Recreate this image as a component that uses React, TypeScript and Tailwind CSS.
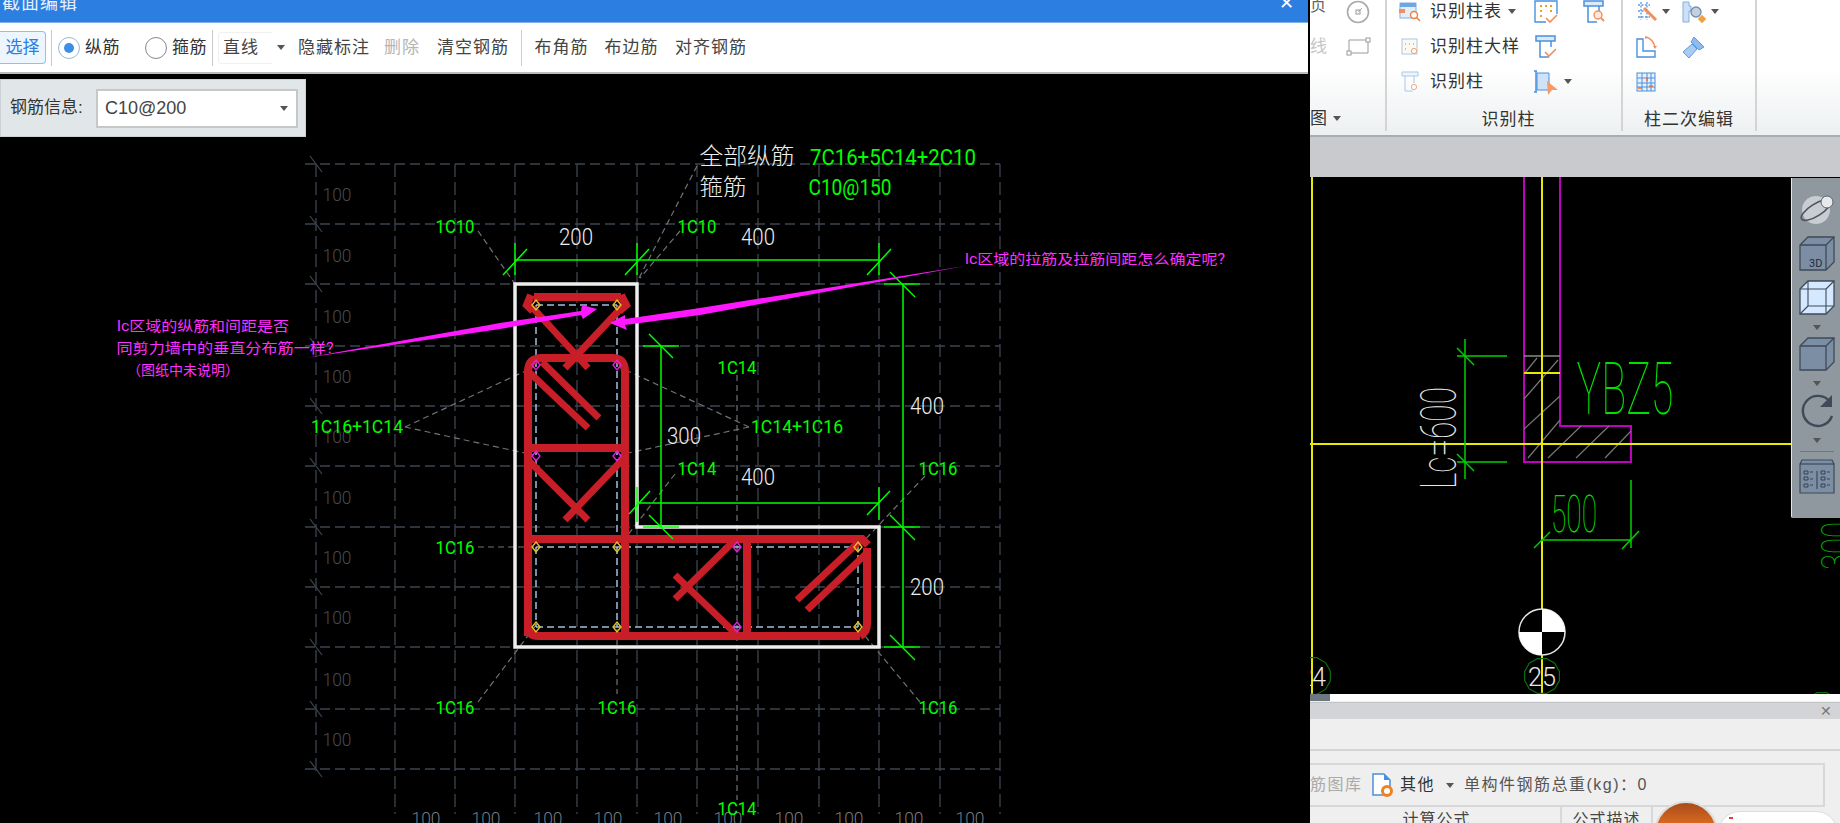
import React from 'react';

const cadFont = "Roboto,'Noto Sans CJK SC',sans-serif";
const H_LINES = [164, 224, 284, 346, 406, 466, 527, 587, 647, 709, 769];
const V_LINES = [316, 395, 455, 515, 577, 637, 697, 758, 819, 879, 940, 1000];
const LEFT_100 = [194, 255, 316, 376, 436, 497, 557, 617, 679, 739];
const BOTTOM_100 = [426, 486, 548, 608, 668, 728, 789, 849, 909, 970];

// cad label, squeezed to the measured width
const Cad = ({ x, y, w, size = 19, weight = 300, color = '#00ff00', children, rotate }: { x: number; y: number; w: number; size?: number; weight?: number; color?: string; children: React.ReactNode; rotate?: number }) => (
  <text
    x={x}
    y={y}
    textAnchor="middle"
    dominantBaseline="central"
    textLength={w}
    lengthAdjust="spacingAndGlyphs"
    fontSize={size}
    fontWeight={weight}
    fill={color}
    fontFamily={cadFont}
    transform={rotate ? `rotate(${rotate} ${x} ${y})` : undefined}
  >
    {children}
  </text>
);

const Seg = ({ p, color = '#00ff00', w = 1.5, dash }: { p: number[]; color?: string; w?: number; dash?: string }) => (
  <polyline points={p.join(',')} fill="none" stroke={color} strokeWidth={w} strokeDasharray={dash} />
);

const Marker = ({ x, y, color }: { x: number; y: number; color: string }) => (
  <polygon points={`${x},${y - 5} ${x + 4},${y} ${x},${y + 5} ${x - 4},${y}`} fill="none" stroke={color} strokeWidth={1.4} />
);

const Gon = ({ cx, cy, r }: { cx: number; cy: number; r: number }) => {
  const pts = Array.from({ length: 12 }, (_, i) => {
    const a = (i * Math.PI) / 6 + Math.PI / 12;
    return `${cx + r * Math.cos(a)},${cy + r * Math.sin(a)}`;
  }).join(' ');
  return <polygon points={pts} fill="none" stroke="#0a6d0a" strokeWidth={1.2} />;
};

const SectionDrawing = () => {
  const red = '#c81e28';
  const grey = '#6f7276';
  const blue = '#9fc0dc';
  return (
    <svg className="absolute inset-0" width={1308} height={749} viewBox="0 74 1308 749">
      {/* axis grid */}
      {H_LINES.map((y) => (
        <g key={y}>
          <Seg p={[305, y, 1000, y]} color="#3d444f" w={1.3} dash="10 5" />
          <Seg p={[310, y - 8, 322, y + 8]} color="#3d444f" w={1.2} />
        </g>
      ))}
      {V_LINES.map((x) => (
        <Seg key={x} p={[x, 164, x, x === 316 ? 774 : 814]} color="#3d444f" w={1.3} dash="13 5" />
      ))}
      {LEFT_100.map((y) => (
        <Cad key={y} x={337} y={y} w={29} color="#474b53">100</Cad>
      ))}
      {BOTTOM_100.map((x) => (
        <Cad key={x} x={x} y={818} w={29} color="#777b82">100</Cad>
      ))}

      {/* leaders */}
      <Seg p={[478, 231, 515, 284]} color={grey} w={1.2} dash="6 4" />
      <Seg p={[697, 166, 637, 282]} color={grey} w={1.2} dash="6 4" />
      <Seg p={[680, 231, 640, 278]} color={grey} w={1.2} dash="6 4" />
      <Seg p={[405, 427, 534, 367]} color={grey} w={1.2} dash="6 4" />
      <Seg p={[405, 427, 534, 455]} color={grey} w={1.2} dash="6 4" />
      <Seg p={[749, 427, 619, 367]} color={grey} w={1.2} dash="6 4" />
      <Seg p={[749, 427, 619, 455]} color={grey} w={1.2} dash="6 4" />
      <Seg p={[737, 375, 737, 800]} color={grey} w={1.2} dash="6 4" />
      <Seg p={[675, 474, 620, 545]} color={grey} w={1.2} dash="6 4" />
      <Seg p={[925, 476, 860, 545]} color={grey} w={1.2} dash="6 4" />
      <Seg p={[478, 547, 534, 547]} color={grey} w={1.2} dash="6 4" />
      <Seg p={[478, 702, 536, 625]} color={grey} w={1.2} dash="6 4" />
      <Seg p={[617, 629, 617, 694]} color={grey} w={1.2} dash="6 4" />
      <Seg p={[920, 702, 860, 630]} color={grey} w={1.2} dash="6 4" />

      {/* concrete outline */}
      <polygon points="515,284 637,284 637,527 879,527 879,647 515,647" fill="none" stroke="#eeeeee" strokeWidth={3.5} />

      {/* inner dashed */}
      <g fill="none" stroke={blue} strokeWidth={1.5} strokeDasharray="7 4">
        <path d="M536 305H617" />
        <path d="M536 305V627" />
        <path d="M617 305V627" />
        <path d="M536 547H858V627" />
        <path d="M536 627H858" />
      </g>

      {/* stirrups */}
      <g fill="none" stroke={red} strokeWidth={8}>
        <path d="M534 297H621M531 295L527 305L533 311M621 295L626 305L619 311" />
        <path d="M528 636V372Q528 358 542 358H612Q625 358 625 372V636" />
        <path d="M528 448H625" />
        <path d="M528 539H862L868 545" />
        <path d="M528 625Q528 636 538 636H860" />
        <path d="M747 541V636" />
        <path d="M867 548V624Q867 632 860 636" />
      </g>
      <g fill="none" stroke={red} strokeWidth={7}>
        <path d="M533 308L588 368M623 306L565 368" />
        <path d="M542 362L599 418M530 373L588 428" />
        <path d="M528 460L588 520M625 457L565 520" />
        <path d="M737 538L675 599M737 635L675 575" />
        <path d="M863 538L797 600M868 552L807 610" />
      </g>

      {[[536, 305], [617, 305], [536, 547], [617, 547], [536, 627], [617, 627], [858, 547], [858, 627]].map(([x, y]) => (
        <Marker key={`${x}-${y}`} x={x} y={y} color="#e8c020" />
      ))}
      {[[536, 365], [617, 365], [536, 456], [617, 456], [737, 547], [737, 627]].map(([x, y]) => (
        <Marker key={`${x}-${y}`} x={x} y={y} color="#e020e0" />
      ))}

      {/* dimensions */}
      <Seg p={[515, 260, 879, 260]} />
      {[515, 637, 879].map((x) => (
        <g key={x}>
          <Seg p={[x, 243, x, 275]} />
          <Seg p={[x - 12, 275, x + 12, 249]} />
        </g>
      ))}
      <Seg p={[903, 284, 903, 647]} />
      {[284, 527, 647].map((y) => (
        <g key={y}>
          <Seg p={[884, y, 920, y]} />
          <Seg p={[890, y - 12, 915, y + 13]} />
        </g>
      ))}
      <Seg p={[661, 346, 661, 527]} />
      {[346, 527].map((y) => (
        <g key={y}>
          <Seg p={[643, y, 679, y]} />
          <Seg p={[649, y - 12, 673, y + 12]} />
        </g>
      ))}
      <Seg p={[637, 503, 879, 503]} />
      <Seg p={[637, 487, 637, 522]} />
      <Seg p={[629, 514, 650, 491]} />
      <Seg p={[879, 487, 879, 520]} />
      <Seg p={[867, 515, 890, 491]} />

      {/* labels */}
      <Cad x={747} y={156} w={95} size={23} color="#eeeeee">全部纵筋</Cad>
      <Cad x={723} y={187} w={47} size={23} color="#eeeeee">箍筋</Cad>
      <Cad x={893} y={157} w={166} size={22} weight={400}>7C16+5C14+2C10</Cad>
      <Cad x={850} y={187} w={83} size={22} weight={400}>C10@150</Cad>
      <Cad x={455} y={226} w={39} weight={400}>1C10</Cad>
      <Cad x={697} y={226} w={39} weight={400}>1C10</Cad>
      <Cad x={576} y={237} w={34} size={23} color="#eeeeee">200</Cad>
      <Cad x={758} y={237} w={34} size={23} color="#eeeeee">400</Cad>
      <Cad x={737} y={367} w={39} weight={400}>1C14</Cad>
      <Cad x={357} y={426} w={92} weight={400}>1C16+1C14</Cad>
      <Cad x={797} y={426} w={92} weight={400}>1C14+1C16</Cad>
      <Cad x={684} y={436} w={34} size={23} color="#eeeeee">300</Cad>
      <Cad x={927} y={406} w={34} size={23} color="#eeeeee">400</Cad>
      <Cad x={697} y={468} w={39} weight={400}>1C14</Cad>
      <Cad x={758} y={477} w={34} size={23} color="#eeeeee">400</Cad>
      <Cad x={938} y={468} w={39} weight={400}>1C16</Cad>
      <Cad x={455} y={547} w={39} weight={400}>1C16</Cad>
      <Cad x={927} y={587} w={34} size={23} color="#eeeeee">200</Cad>
      <Cad x={455} y={707} w={39} weight={400}>1C16</Cad>
      <Cad x={617} y={707} w={39} weight={400}>1C16</Cad>
      <Cad x={938} y={707} w={39} weight={400}>1C16</Cad>
      <Cad x={737} y={808} w={39} weight={400}>1C14</Cad>

      {/* markup */}
      <polygon points="305,358 500,323 581,311 582,305 597,309 583,319 581,315 500,329" fill="#ff18ff" />
      <polygon points="965,266 700,308 625,319 625,315 610,323 627,330 625,325 700,315" fill="#ff18ff" />
      <Cad x={1095} y={259} w={260} size={14} weight={400} color="#ff30ff">lc区域的拉筋及拉筋间距怎么确定呢?</Cad>
      <Cad x={203} y={326} w={172} size={14} weight={400} color="#ff30ff">lc区域的纵筋和间距是否</Cad>
      <Cad x={225} y={348} w={217} size={14} weight={400} color="#ff30ff">同剪力墙中的垂直分布筋一样?</Cad>
      <Cad x={183} y={370} w={112} size={14} weight={400} color="#ff30ff">（图纸中未说明）</Cad>
    </svg>
  );
};

const FloorPlan = () => {
  const yellow = '#e8e800';
  const green = '#00a800';
  const bright = '#00d000';
  return (
    <svg className="absolute inset-0" width={530} height={517} viewBox="1310 177 530 517">
      <Seg p={[1524, 177, 1524, 462, 1631, 462, 1631, 426, 1560, 426, 1560, 177]} color="#c000c0" w={2} />
      <Seg p={[1524, 356, 1560, 356]} color="#8a8a8a" w={1.6} />
      <g stroke="#777" strokeWidth={1.2}>
        <path d="M1524 374L1537 358M1524 399L1558 360M1524 429L1560 396M1528 458L1560 420M1548 458L1581 426M1576 458L1609 426M1605 458L1631 431" />
      </g>
      <Seg p={[1312, 177, 1312, 694]} color={yellow} w={2} />
      <Seg p={[1542, 177, 1542, 694]} color={yellow} w={2} />
      <Seg p={[1310, 444, 1791, 444]} color={yellow} w={2} />
      <Seg p={[1524, 373, 1560, 373]} color={yellow} w={2} />

      <Seg p={[1465, 339, 1465, 479]} color={bright} />
      <Seg p={[1457, 356, 1507, 356]} color={bright} />
      <Seg p={[1457, 462, 1507, 462]} color={bright} />
      <Seg p={[1457, 348, 1474, 365]} color={bright} />
      <Seg p={[1457, 454, 1474, 471]} color={bright} />
      <Cad x={1439} y={438} w={102} size={50} weight={100} color="#e8e8e8" rotate={-90}>Lc=600</Cad>
      <Cad x={1625} y={389} w={97} size={72} weight={100} color="#00e000">YBZ5</Cad>
      <Cad x={1574} y={514} w={46} size={52} weight={100} color="#00e000">500</Cad>
      <Seg p={[1542, 540, 1631, 540]} color={bright} />
      <Seg p={[1631, 480, 1631, 548]} color={bright} />
      <Seg p={[1534, 548, 1550, 532]} color={bright} />
      <Seg p={[1622, 549, 1639, 531]} color={bright} />
      <Cad x={1836} y={546} w={48} size={42} weight={100} color={green} rotate={-90}>300</Cad>

      {/* section mark */}
      <circle cx={1542} cy={632} r={23} fill="#000" stroke="#e8e8e8" strokeWidth={1.5} />
      <path d="M1542 609A23 23 0 0 1 1565 632H1542Z" fill="#fff" />
      <path d="M1542 632V655A23 23 0 0 1 1519 632Z" fill="#fff" />

      <Gon cx={1542} cy={676} r={18} />
      <Gon cx={1312} cy={676} r={19} />
      <Gon cx={1822} cy={710} r={18} />
      <Cad x={1542} y={677} w={28} size={26} color="#e6e6e6">25</Cad>
      <Cad x={1312} y={677} w={28} size={26} color="#e6e6e6">24</Cad>
    </svg>
  );
};

const Caret = ({ className = '' }: { className?: string }) => (
  <span className={`inline-block h-0 w-0 border-x-[4px] border-t-[5px] border-x-transparent border-t-[#555] ${className}`} />
);

const ToolBtn = ({ w, children, dim }: { w: string; children: React.ReactNode; dim?: boolean }) => (
  <span className={`flex h-[32px] items-center justify-center whitespace-nowrap rounded-sm text-[17px] tracking-[1px] ${w} ${dim ? 'text-[#b5b5b5]' : 'text-[#444]'}`}>
    {children}
  </span>
);

const Radio = ({ on, label }: { on?: boolean; label: string }) => (
  <span className="flex items-center gap-[5px]">
    <span className={`flex h-[22px] w-[22px] items-center justify-center rounded-full border ${on ? 'border-[#9bb9d8]' : 'border-[#888]'}`}>
      {on && <span className="h-[10px] w-[10px] rounded-full bg-[#3e8ee8]" />}
    </span>
    <span className="text-[17px] tracking-[0.5px] text-[#333]">{label}</span>
  </span>
);

const LeftDialog = () => (
  <section className="flex h-full w-[1308px] shrink-0 flex-col bg-black">
    <div className="flex h-[23px] items-center justify-between overflow-hidden border-b border-[#7fb0ea] bg-[#2c7fe0] pl-[2px] pr-[14px]">
      <span className="-mt-[16px] text-[18px] tracking-[1px] text-[#e6f0fc]">截面编辑</span>
      <span className="-mt-[16px] text-[18px] text-white">✕</span>
    </div>
    <div className="flex h-[51px] items-center border-b-2 border-[#bbb] bg-white">
      <span className="flex h-[33px] w-[46px] items-center justify-center rounded-r-[4px] border border-l-0 border-[#8fc0f0] bg-[#edf6ff] text-[17px] text-[#2c7fe0]">选择</span>
      <span className="ml-[5px] h-[36px] w-px bg-[#ccc]" />
      <span className="ml-[6px] w-[87px]"><Radio on label="纵筋" /></span>
      <span className="w-[67px]"><Radio label="箍筋" /></span>
      <span className="h-[36px] w-px bg-[#ccc]" />
      <span className="ml-[5px] flex h-[32px] w-[54px] items-center rounded-l-[4px] border border-r-0 border-[#f0f0f0] pl-[4px] text-[17px] tracking-[1px] text-[#444]">直线</span>
      <Caret className="ml-[5px] mr-[11px]" />
      <ToolBtn w="w-[76px]">隐藏标注</ToolBtn>
      <span className="w-[12px]" />
      <ToolBtn w="w-[36px]" dim>删除</ToolBtn>
      <span className="w-[17px]" />
      <ToolBtn w="w-[72px]">清空钢筋</ToolBtn>
      <span className="ml-[12px] h-[36px] w-px bg-[#ccc]" />
      <span className="w-[12px]" />
      <ToolBtn w="w-[55px]">布角筋</ToolBtn>
      <span className="w-[15px]" />
      <ToolBtn w="w-[55px]">布边筋</ToolBtn>
      <span className="w-[16px]" />
      <ToolBtn w="w-[72px]">对齐钢筋</ToolBtn>
    </div>
    <div className="relative flex-1 overflow-hidden">
      <SectionDrawing />
      <div className="absolute left-0 top-[5px] flex h-[58px] w-[306px] items-center border border-[#ccd2d4] bg-[#e1e7e9] pl-[9px]">
        <span className="w-[86px] whitespace-nowrap text-[17px] text-[#333]">钢筋信息:</span>
        <span className="flex h-[39px] w-[202px] items-center justify-between border-2 border-[#c6c8c8] bg-white pl-[7px] pr-[8px] font-['Liberation_Sans',sans-serif] text-[18px] text-[#444]">
          C10@200
          <Caret />
        </span>
      </div>
    </div>
  </section>
);

const IconTable = () => (
  <svg width="22" height="20" viewBox="0 0 22 20" fill="none">
    <rect x="1" y="1" width="16" height="15" fill="#e4eefa" stroke="#7fb0e4" />
    <rect x="1" y="1" width="16" height="4" fill="#6ea6e2" />
    <rect x="0" y="7" width="6" height="4" fill="#f09060" />
    <circle cx="15" cy="13" r="3.5" fill="#fff" stroke="#ee8040" strokeWidth="1.4" />
    <path d="M17.5 15.5L21 19" stroke="#ee8040" strokeWidth="1.6" />
  </svg>
);
const IconDotted = () => (
  <svg width="18" height="18" viewBox="0 0 18 18" fill="none">
    <rect x="1" y="1" width="15" height="15" fill="#fdf8f2" stroke="#a8c8ea" />
    <path d="M4 6h1M8 6h1M12 6h1M4 11h1" stroke="#f0a060" strokeWidth="1.4" />
    <circle cx="13" cy="13" r="2.6" fill="#fff" stroke="#f0a070" />
  </svg>
);
const IconColumn = ({ badge }: { badge: 'search' | 'check' }) => (
  <svg width="24" height="24" viewBox="0 0 24 24" fill="none">
    <path d="M2 1H21V6H2Z" fill="#dbe9f8" stroke="#4a90e0" strokeWidth="1.5" />
    <path d="M6 6V22H15M17 6V12" stroke="#4a90e0" strokeWidth="1.5" />
    {badge === 'search' && <><circle cx="16" cy="15" r="4" fill="#fde8dc" stroke="#f09060" strokeWidth="1.4" /><path d="M19 18L22 21" stroke="#f09060" strokeWidth="1.8" /></>}
    {badge === 'check' && <path d="M11 17L15 21L22 14" stroke="#f09060" strokeWidth="1.7" />}
  </svg>
);
const IconColumnSmall = () => (
  <svg width="18" height="21" viewBox="0 0 18 21" fill="none">
    <path d="M1 1H17V5H1Z" fill="#eef4fb" stroke="#a8c8ea" />
    <path d="M4 5V20H12M13 5V12" stroke="#a8c8ea" />
    <circle cx="13" cy="16" r="2.6" fill="#fff" stroke="#f0a888" />
  </svg>
);
const IconDotCheck = () => (
  <svg width="24" height="24" viewBox="0 0 24 24" fill="none">
    <path d="M12 22H1V1H23V14" stroke="#4a90e0" strokeWidth="1.4" />
    <path d="M6 6h2M11 6h2M16 6h2M6 11h2M16 11h2M6 16h2" stroke="#f0a020" strokeWidth="2" />
    <path d="M12 18L16 22L23 15" stroke="#f09060" strokeWidth="1.7" />
  </svg>
);
const IconPointer = () => (
  <svg width="24" height="26" viewBox="0 0 24 26" fill="none">
    <path d="M0 2H3M0 23H3M2 2V23" stroke="#4a90e0" strokeWidth="1.5" />
    <path d="M3 4H15V21H3Z" fill="#cfe2f8" stroke="#4a90e0" />
    <path d="M13 12L24 21L18 21L14 26Z" fill="#f59a68" />
  </svg>
);
const IconBars = () => (
  <svg width="22" height="20" viewBox="0 0 22 20" fill="none">
    <path d="M2 3H14M2 9H10M2 15H14M5 0V18M11 0V18" stroke="#5b9be4" strokeWidth="1.3" strokeDasharray="2 1.5" />
    <path d="M8 6L20 18" stroke="#ee9060" strokeWidth="3" />
  </svg>
);
const IconKeyScan = () => (
  <svg width="24" height="22" viewBox="0 0 24 22" fill="none">
    <path d="M1 1H7V5H9V10H7V21H1Z" fill="#cfe0f6" stroke="#7fb0e4" />
    <circle cx="14" cy="11" r="5" fill="#c6d0dc" stroke="#6c90b8" strokeWidth="1.4" />
    <rect x="17" y="15" width="6" height="6" transform="rotate(45 20 18)" fill="#f5a040" />
  </svg>
);
const IconCorner = () => (
  <svg width="21" height="22" viewBox="0 0 21 22" fill="none">
    <path d="M1 3H7V15H19V21H1Z" fill="#fff" stroke="#4a90e0" strokeWidth="1.4" />
    <path d="M10 1Q17 3 19 11" stroke="#f09060" strokeWidth="1.4" />
    <path d="M9 0V3L12 1.5ZM17 10H21L19 13Z" fill="#f09060" />
  </svg>
);
const IconHammer = () => (
  <svg width="24" height="25" viewBox="0 0 24 25" fill="none">
    <path d="M12 3L22 13L17 16L9 8Z" fill="#8fbcf0" stroke="#5b9be4" />
    <path d="M10 10L15 15L7 24L1 18Z" fill="#a8cbf3" stroke="#5b9be4" />
  </svg>
);
const IconGrid = () => (
  <svg width="20" height="20" viewBox="0 0 20 20" fill="none">
    <rect x="1" y="1" width="18" height="18" fill="#e8f1fb" stroke="#4a90e0" />
    <path d="M1 6H19M1 11H19M1 15H19M6 1V19M11 1V19M15 1V19" stroke="#4a90e0" />
    <path d="M11 5v4M2 16h4M13 14h4" stroke="#f07030" strokeWidth="1.6" />
  </svg>
);

const Ribbon = () => (
  <div className="flex h-[137px] shrink-0 overflow-hidden border-b-2 border-[#a9acb0] bg-gradient-to-b from-white via-white to-[#edf0f1]">
    <div className="flex h-[131px] w-[77px] flex-col border-r-2 border-[#d2d4d6]">
      <div className="grid flex-1 grid-cols-[36px_40px] grid-rows-[35px_35px_1fr] -mt-[6px]">
        <span className="text-[16px] text-[#666]">页</span>
        <span className="flex items-center"><svg width="24" height="24" viewBox="0 0 24 24" fill="none"><circle cx="12" cy="12" r="10.5" stroke="#aaa" strokeWidth="1.6" /><path d="M12 12L16 8" stroke="#aaa" /><rect x="10" y="10" width="4" height="4" stroke="#999" /></svg></span>
        <span className="flex items-center text-[17px] text-[#c6c6c6]">线</span>
        <span className="flex items-center"><svg width="25" height="19" viewBox="0 0 25 19" fill="none"><path d="M3 3H22V16H3Z" stroke="#999" /><rect x="20" y="1" width="4" height="4" fill="#fff" stroke="#999" /><rect x="1" y="14" width="4" height="4" fill="#fff" stroke="#999" /></svg></span>
      </div>
      <div className="flex h-[22px] items-center gap-[6px] pb-[3px] text-[17px] text-[#333]">图<Caret /></div>
    </div>
    <div className="flex h-[131px] w-[236px] flex-col border-r-2 border-[#d2d4d6]">
      <div className="-mt-[6px] grid flex-1 grid-cols-[43px_104px_48px_41px] grid-rows-[35px_35px_35px] items-center text-[17px] tracking-[1px] text-[#333]">
        <span className="justify-self-center pl-[3px]"><IconTable /></span>
        <span className="flex items-center gap-[6px] whitespace-nowrap">识别柱表<Caret /></span>
        <IconDotCheck />
        <IconColumn badge="search" />
        <span className="justify-self-center pl-[3px]"><IconDotted /></span>
        <span className="whitespace-nowrap">识别柱大样</span>
        <IconColumn badge="check" />
        <span />
        <span className="justify-self-center pl-[3px]"><IconColumnSmall /></span>
        <span>识别柱</span>
        <span className="flex items-center gap-[2px]"><IconPointer /><Caret className="ml-[4px]" /></span>
        <span />
      </div>
      <div className="flex h-[22px] items-center justify-center pb-[1px] pl-[9px] text-[17px] tracking-[1px] text-[#333]">识别柱</div>
    </div>
    <div className="flex h-[131px] w-[134px] flex-col border-r-2 border-[#d2d4d6]">
      <div className="-mt-[6px] grid flex-1 grid-cols-[46px_1fr] grid-rows-[35px_35px_35px] items-center pl-[13px]">
        <span className="flex items-center gap-[4px]"><IconBars /><Caret /></span>
        <span className="flex items-center gap-[1px]"><IconKeyScan /><Caret className="ml-[4px]" /></span>
        <IconCorner />
        <IconHammer />
        <IconGrid />
      </div>
      <div className="flex h-[22px] items-center justify-center pb-[1px] text-[17px] tracking-[1px] text-[#333]">柱二次编辑</div>
    </div>
  </div>
);

const SideTools = () => (
  <div className="absolute right-0 top-[1px] flex h-[340px] w-[49px] flex-col items-center rounded-bl-[2px] border-l border-[#e8e8e8] bg-[#8f979f] pl-[2px]">
    <svg className="mt-[15px] shrink-0" width="36" height="32" viewBox="0 0 36 32" fill="none">
      <circle cx="17" cy="17" r="14" fill="#c9ccd2" />
      <ellipse cx="17" cy="17" rx="17" ry="6" transform="rotate(-32 17 17)" stroke="#4c5560" strokeWidth="1.6" />
      <circle cx="28" cy="9" r="6" fill="#e6e8ec" stroke="#5c6570" />
    </svg>
    <svg className="mt-[11px] shrink-0" width="36" height="35" viewBox="0 0 36 35" fill="none">
      <path d="M1 9L9 1H35V26L27 34H1Z" fill="#7c8ea4" stroke="#3f4a58" strokeWidth="1.3" />
      <path d="M1 9H27V34M27 9L35 1" stroke="#3f4a58" strokeWidth="1.3" />
      <text x="10" y="31" fontSize="11" fill="#1f2a38" fontFamily={cadFont}>3D</text>
    </svg>
    <svg className="mt-[9px] shrink-0" width="36" height="35" viewBox="0 0 36 35" fill="none">
      <path d="M1 9L9 1H35V26L27 34H1Z" fill="#d4e8ff" stroke="#3f4a58" strokeWidth="1.3" />
      <path d="M1 9H27V34M27 9L35 1M9 1V26H35M9 26L1 34" stroke="#3f4a58" strokeWidth="1.1" />
    </svg>
    <Caret className="mt-[10px] shrink-0 border-t-[#3f4a58]" />
    <svg className="mt-[7px] shrink-0" width="36" height="34" viewBox="0 0 36 34" fill="none">
      <path d="M1 9L9 1H35V25L27 33H1Z" fill="#7c8ea4" stroke="#3f4a58" strokeWidth="1.3" />
      <path d="M1 9H27V33M27 9L35 1" stroke="#3f4a58" strokeWidth="1.3" />
    </svg>
    <Caret className="mt-[10px] shrink-0 border-t-[#3f4a58]" />
    <svg className="mt-[8px] shrink-0" width="36" height="34" viewBox="0 0 36 34" fill="none">
      <path d="M31 8A15 15 0 1 0 33 22" stroke="#3f4a58" strokeWidth="2.4" />
      <path d="M33 1V13H21Z" fill="#3f4a58" />
    </svg>
    <Caret className="mt-[10px] shrink-0 border-t-[#3f4a58]" />
    <span className="mt-[8px] h-px w-[34px] shrink-0 bg-[#6d757e]" />
    <svg className="mt-[7px] shrink-0" width="36" height="35" viewBox="0 0 36 35" fill="none">
      <path d="M3 1H33L35 5V34H1V5Z" fill="#7c8ea4" stroke="#3f4a58" strokeWidth="1.2" />
      <path d="M1 5H35M18 12V30" stroke="#2f3a48" />
      <path d="M5 12h4v3H5zM5 18h4v3H5zM5 25h4v3H5zM22 12h4v3h-4zM22 18h4v3h-4zM22 25h4v3h-4zM11 13h3M11 20h3M11 26h3M28 13h3M28 20h3M28 26h3" stroke="#2f3a48" strokeWidth="0.9" />
    </svg>
  </div>
);

const BottomPanel = () => (
  <div className="relative h-[129px] shrink-0 overflow-hidden bg-[#efefef]">
    <div className="h-[7px] bg-white"><div className="h-[7px] w-[20px] bg-[#6c7780]" /></div>
    <div className="mt-[1px] flex h-[16px] items-center justify-end border-t border-[#c2c4c8] bg-[#d2d4d8] pr-[8px] text-[14px] leading-none text-[#777]">✕</div>
    <div className="h-[33px] border-b-2 border-t border-[#d4d4d4]" />
    <div className="mt-[12px] mr-[15px] flex h-[44px] items-center border-y-2 border-r-2 border-[#d8d8d8] text-[16px] tracking-[1.5px] text-[#555]">
      <span className="w-[62px] whitespace-nowrap text-[#aaa]">筋图库</span>
      <svg className="w-[22px]" width="22" height="24" viewBox="0 0 22 24" fill="none">
        <path d="M1 1H12L18 7V22H1Z" fill="#fff" stroke="#4a90e0" strokeWidth="1.5" />
        <path d="M12 1V7H18" fill="#4a90e0" />
        <circle cx="15" cy="18" r="4.5" fill="#fff" stroke="#f08020" strokeWidth="3" />
      </svg>
      <span className="ml-[6px] w-[42px] whitespace-nowrap text-[#333]">其他</span>
      <Caret className="ml-[4px] mr-[10px]" />
      <span className="whitespace-nowrap">单构件钢筋总重(kg)：0</span>
    </div>
    <div className="flex h-[17px] items-start text-[16px] tracking-[1px] text-[#444]">
      <span className="w-[3px] border-r border-[#d0d0d0]" />
      <span className="h-[17px] w-[249px] border-r-2 border-[#d8d8d8] pt-[1px] text-center">计算公式</span>
      <span className="h-[17px] w-[91px] border-r-2 border-[#d8d8d8] pt-[1px] text-center">公式描述</span>
    </div>
    <div className="absolute left-[344px] top-[107px] h-[64px] w-[64px] rounded-full border-[2px] border-[#ddd] bg-gradient-to-b from-[#a84a1c] via-[#f07a20] to-[#f08a30]" />
    <div className="absolute left-[408px] top-[117px] h-[40px] w-[120px] rounded-t-[22px] border border-[#ddd] bg-white">
      <span className="absolute left-[10px] top-[5px] h-[2px] w-[4px] bg-[#e04030]" />
    </div>
  </div>
);

const RightPane = () => (
  <section className="flex h-full min-w-0 flex-1 flex-col border-l-2 border-black bg-white">
    <Ribbon />
    <div className="h-[40px] shrink-0 bg-[#c8cacd]" />
    <div className="relative flex-1 overflow-hidden bg-black">
      <FloorPlan />
      <SideTools />
    </div>
    <BottomPanel />
  </section>
);

export default function App() {
  return (
    <div className="flex h-[823px] w-[1840px] overflow-hidden bg-black font-['Liberation_Sans','Noto_Sans_CJK_SC',sans-serif]">
      <LeftDialog />
      <RightPane />
    </div>
  );
}
